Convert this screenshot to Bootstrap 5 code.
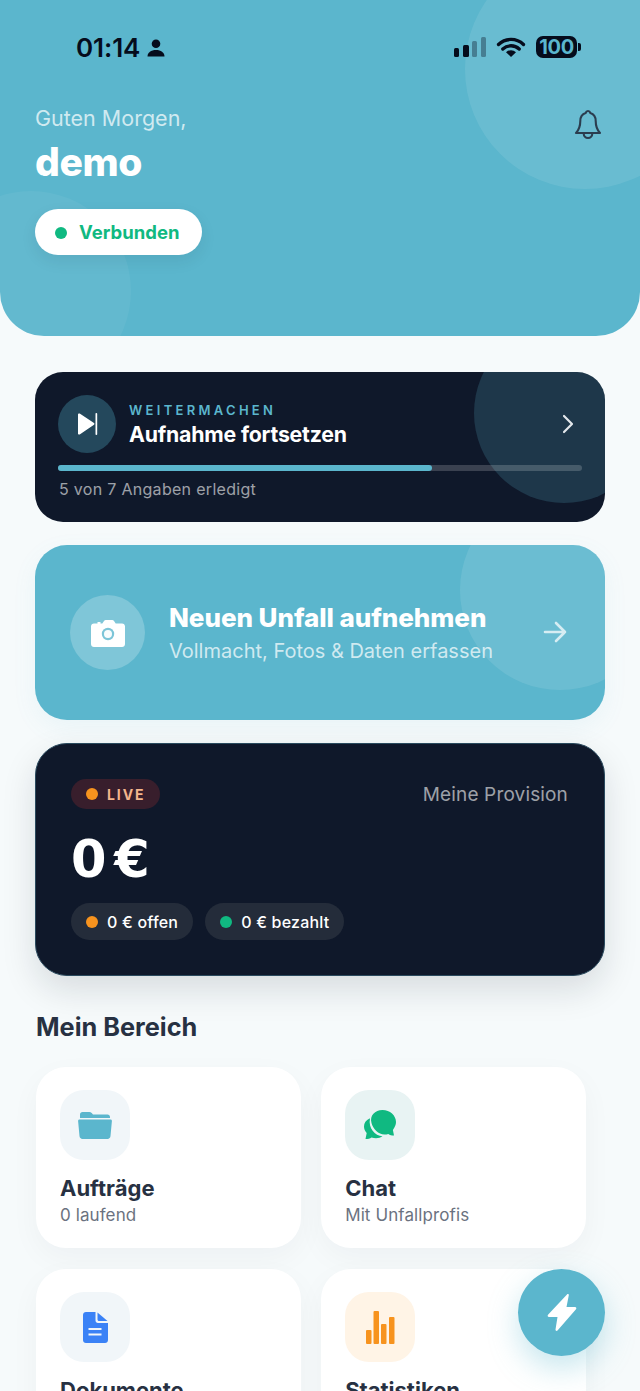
<!DOCTYPE html>
<html lang="de">
<head>
    <meta charset="UTF-8">
    <meta name="viewport" content="width=device-width, initial-scale=1.0">
    <title>Start</title>
    <link href="https://cdn.jsdelivr.net/npm/bootstrap@5.3.0/dist/css/bootstrap.min.css" rel="stylesheet">
    <style>
        html, body { height: 1391px; overflow: hidden; }
        body { font-family: Inter, "Liberation Sans", sans-serif; background: #f6fafb; color: #273142; }
        .app-screen { position: relative; height: 1391px; overflow: hidden; }

        /* header */
        .hero { position: relative; height: 336px; background: #5bb6cd; border-radius: 0 0 44px 44px; overflow: hidden; padding: 33px 36px 0 36px; }
        .blob { position: absolute; border-radius: 50%; }
        .blob-top { width: 240px; height: 240px; left: 465px; top: -51px; background: rgba(255,255,255,.09); }
        .blob-low { width: 200px; height: 200px; left: -69px; top: 191px; background: rgba(255,255,255,.05); }
        .status-row { position: relative; height: 30px; padding-left: 40px; color: #050c1c; }
        .clock { font-size: 26px; font-weight: 600; line-height: 30px; letter-spacing: -.1px; }
        .status-person { margin-left: 7px; }
        .status-right { margin-right: 23px; margin-top: -2px; }
        .status-wifi { margin: 0 10px 0 9px; }
        .battery { width: 41px; height: 22px; border-radius: 7px; background: #050c1c; color: #5bb6cd; font-size: 20px; font-weight: 700; line-height: 22px; text-align: center; letter-spacing: -.3px; }
        .battery-nub { width: 3px; height: 8px; background: #050c1c; border-radius: 0 2px 2px 0; margin-left: 1px; }
        .hello { position: relative; margin-top: 40px; margin-left: -1px; font-size: 21.500px; line-height: 30px; color: rgba(255,255,255,.72); }
        .bell-btn { position: absolute; left: 573px; top: 108px; }
        .user-name { position: relative; font-size: 39px; font-weight: 800; line-height: 44px; margin-top: 7px; margin-left: -1px; color: #fff; letter-spacing: -.4px; }
        .conn-pill { position: relative; display: inline-flex; align-items: center; gap: 12px; height: 46px; width: 167px; margin: 25px 0 0 -1px; padding-left: 20px; padding-top: 1px; border-radius: 23px; background: #fff; color: #10b981; font-size: 18.500px; font-weight: 700; box-shadow: 0 6px 16px rgba(15,23,42,.08); }
        .dot { display: inline-block; flex: none; width: 12px; height: 12px; border-radius: 50%; }
        .dot-green { background: #10b981; }
        .dot-orange { background: #f7931e; }

        /* cards */
        .content { padding: 36px 35px 0 35px; }
        .resume-box { position: relative; height: 150px; border-radius: 28px; background: #0f182a; overflow: hidden; padding: 23px 23px 0 23px; color: #fff; }
        .resume-blob { width: 180px; height: 180px; left: 439px; top: -49px; background: rgba(91,182,205,.2); }
        .resume-icon { position: relative; width: 58px; height: 58px; border-radius: 50%; background: #24485c; }
        .resume-text { position: relative; margin-left: 5px; margin-top: 2px; }
        .resume-kicker { font-size: 13px; font-weight: 600; line-height: 16px; letter-spacing: 3.300px; color: #5bb6cd; }
        .resume-title { font-size: 21.300px; font-weight: 700; line-height: 28px; margin-top: 2px; letter-spacing: -.2px; }
        .resume-chevron { position: absolute; left: 526px; top: 42px; }
        .track { position: relative; height: 6px; width: 524px; margin-top: 12px; border-radius: 3px; background: rgba(255,255,255,.18); }
        .track-fill { height: 6px; border-radius: 3px; background: #5bb6cd; }
        .resume-note { position: relative; margin-top: 8px; margin-left: 1px; font-size: 16px; line-height: 20px; letter-spacing: .3px; color: rgba(255,255,255,.6); }

        .new-box { position: relative; height: 175px; margin-top: 23px; border-radius: 32px; background: #5bb6cd; overflow: hidden; padding-left: 35px; color: #fff; box-shadow: 0 8px 24px rgba(91,182,205,.08); }
        .new-blob { width: 200px; height: 200px; left: 425px; top: -55px; background: rgba(255,255,255,.1); }
        .new-icon { position: relative; flex: none; width: 75px; height: 75px; border-radius: 50%; background: rgba(255,255,255,.22); }
        .new-text { position: relative; margin-left: 24px; margin-top: 2px; }
        .new-title { font-size: 26px; font-weight: 800; line-height: 34px; letter-spacing: -.05px; margin-top: -1px; }
        .new-sub { font-size: 20px; line-height: 30px; color: rgba(255,255,255,.72); margin-top: 1px; }
        .new-arrow { position: absolute; left: 508px; top: 75px; }

        .money-box { height: 233px; margin-top: 23px; border-radius: 32px; background: #0f182a; border: 1px solid #2a4a5e; padding: 35px 36px 0 35px; color: #fff; box-shadow: 0 14px 34px rgba(15,23,42,.13); }
        .live-pill { display: inline-flex; align-items: center; gap: 9px; height: 30px; padding: 0 15px; border-radius: 15px; background: #381e2c; color: #f3b58c; font-size: 14px; font-weight: 700; letter-spacing: 1.900px; }
        .money-label { font-size: 19px; color: rgba(255,255,255,.6); letter-spacing: .15px; position: relative; top: 1px; }
        .money-value { font-family: "DejaVu Sans", sans-serif; font-size: 51px; font-weight: 700; line-height: 60px; margin-top: 21px; letter-spacing: -5px; }
        .money-pills { margin-top: 13px; gap: 12px; }
        .money-pill { display: inline-flex; align-items: center; gap: 9px; height: 37px; padding: 0 15px; border-radius: 19px; background: #242c3a; font-size: 16px; font-weight: 500; letter-spacing: .2px; }

        /* tiles */
        .section-title { font-size: 25.300px; font-weight: 700; line-height: 34px; margin: 34px 0 23px 1px; color: #273142; }
        .tile-grid { display: grid; grid-template-columns: 265px 265px; gap: 21px 20.200px; margin-left: 1px; }
        .tile { height: 181px; border-radius: 30px; background: #fff; padding: 23px 24px 0 24px; box-shadow: 0 10px 30px rgba(15,23,42,.04); }
        .tile-icon { width: 70px; height: 70px; border-radius: 24px; }
        .tile-title { font-size: 22px; font-weight: 700; line-height: 30px; margin-top: 13px; color: #273142; }
        .tile-sub { font-size: 17px; line-height: 24px; letter-spacing: .1px; color: #6b7280; }
        .tint-slate { background: #f1f6f9; }
        .tint-green { background: #e8f3f3; }
        .tint-orange { background: #fff4e6; }

        .fab { position: absolute; left: 518px; top: 1269px; width: 87px; height: 87px; border-radius: 50%; background: #5bb6cd; box-shadow: 0 12px 30px rgba(91,182,205,.35); }
    </style>
</head>
<body>
<div class="app-screen">
    <header class="hero">
        <div class="blob blob-top"></div>
        <div class="blob blob-low"></div>

        <div class="status-row d-flex align-items-center">
            <span class="clock">01:14</span>
            <svg class="status-person" width="18" height="18" viewBox="0 0 18 18" fill="#050c1c"><circle cx="9" cy="4.800" r="4.300"/><path d="M0.500 17.500c0-4.200 3.600-6.600 8.500-6.600s8.500 2.400 8.500 6.600z"/></svg>
            <div class="status-right ms-auto d-flex align-items-center">
                <svg width="33" height="22" viewBox="0 0 33 22" fill="#050c1c"><rect x="0" y="12" width="5" height="9" rx="1.500"/><rect x="9" y="9" width="6" height="12" rx="1.500"/><rect x="18" y="5" width="5" height="16" rx="1.500" opacity=".35"/><rect x="27" y="1" width="5" height="20" rx="1.500" opacity=".35"/></svg>
                <svg class="status-wifi" width="30" height="22" viewBox="0 0 30 22"><path d="M2.500 8.500a18 18 0 0 1 25 0M6.800 13a12 12 0 0 1 16.400 0" fill="none" stroke="#050c1c" stroke-width="3.300" stroke-linecap="round"/><path d="M15 21l-5-4.800a7.500 7.500 0 0 1 10 0z" fill="#050c1c"/></svg>
                <div class="battery">100</div>
                <div class="battery-nub"></div>
            </div>
        </div>

        <div class="hello">Guten Morgen,</div>
        <div class="user-name">demo</div>
        <div class="conn-pill"><span class="dot dot-green"></span>Verbunden</div>
    </header>

    <svg class="bell-btn" width="30" height="34" viewBox="0 0 30 34" fill="none" stroke="#2b3d4f" stroke-width="2.100" stroke-linecap="round" stroke-linejoin="round"><path d="M15 3c-1.300 0-2 .8-2.300 1.900C9 6 7.300 9 7.300 13c0 5-1.500 9-4.300 12h24c-2.800-3-4.300-7-4.300-12 0-4-1.700-7-5.400-8.100C17 3.800 16.300 3 15 3z"/><path d="M10.700 25.500c0 2.800 2 4.500 4.300 4.500s4.300-1.700 4.300-4.500"/></svg>

    <main class="content">
        <section class="resume-box">
            <div class="blob resume-blob"></div>
            <div class="d-flex align-items-center gap-2">
                <div class="resume-icon d-flex align-items-center justify-content-center">
                    <svg width="22" height="24" viewBox="0 0 22 24" fill="#fff"><path d="M2 2.500c0-.9.900-1.400 1.700-.9L18 11c.6.400.6 1.300 0 1.700L3.700 22.400c-.8.500-1.700 0-1.700-.9z"/><rect x="19.500" y="1" width="1.700" height="22" rx=".8"/></svg>
                </div>
                <div class="resume-text">
                    <div class="resume-kicker">WEITERMACHEN</div>
                    <div class="resume-title">Aufnahme fortsetzen</div>
                </div>
            </div>
            <svg class="resume-chevron" width="14" height="20" viewBox="0 0 14 20" fill="none" stroke="#e4e8ec" stroke-width="2.200" stroke-linecap="round" stroke-linejoin="round"><path d="M3 2l8 8-8 8"/></svg>
            <div class="track"><div class="track-fill" style="width:71.4%"></div></div>
            <div class="resume-note">5 von 7 Angaben erledigt</div>
        </section>

        <section class="new-box d-flex align-items-center">
            <div class="blob new-blob"></div>
            <div class="new-icon d-flex align-items-center justify-content-center">
                <svg width="34" height="28" viewBox="0 0 34 28" fill="#fff"><path d="M3 4.500h3.500V3h3v1.500h1.800L13 2c.4-.6 1-1 1.800-1h6.400c.8 0 1.400.4 1.800 1l1.700 2.500H31c1.700 0 3 1.300 3 3V25c0 1.700-1.300 3-3 3H3c-1.700 0-3-1.300-3-3V7.500c0-1.700 1.300-3 3-3z"/><circle cx="17" cy="15" r="6.200" fill="#7cc5d8"/><circle cx="17" cy="15" r="4" fill="#fff" opacity=".95"/></svg>
            </div>
            <div class="new-text">
                <div class="new-title">Neuen Unfall aufnehmen</div>
                <div class="new-sub">Vollmacht, Fotos &amp; Daten erfassen</div>
            </div>
            <svg class="new-arrow" width="24" height="24" viewBox="0 0 24 24" fill="none" stroke="rgba(255,255,255,.72)" stroke-width="2.600" stroke-linecap="round" stroke-linejoin="round"><path d="M2 12h20M13 3l9 9-9 9"/></svg>
        </section>

        <section class="money-box">
            <div class="d-flex justify-content-between align-items-center">
                <span class="live-pill"><span class="dot dot-orange"></span>LIVE</span>
                <span class="money-label">Meine Provision</span>
            </div>
            <div class="money-value">0 €</div>
            <div class="money-pills d-flex">
                <span class="money-pill"><span class="dot dot-orange"></span>0 € offen</span>
                <span class="money-pill"><span class="dot dot-green"></span>0 € bezahlt</span>
            </div>
        </section>

        <h2 class="section-title">Mein Bereich</h2>
        <div class="tile-grid">
            <div class="tile">
                <div class="tile-icon tint-slate d-flex align-items-center justify-content-center">
                    <svg width="34" height="28" viewBox="0 0 34 28" fill="#5bb6cd"><path d="M2 7V3.500C2 2 3 1 4.500 1h6.800c1 0 1.800.4 2.400 1.100L15 3.500h14.500c1.500 0 2.500 1 2.500 2.500v1z"/><path d="M1.500 8.500h31c.9 0 1.500.7 1.400 1.600l-1.400 15c-.1 1.600-1.300 2.900-3 2.900H4.500c-1.700 0-2.900-1.300-3-2.900L.1 10.100c-.1-.9.500-1.600 1.400-1.600z"/></svg>
                </div>
                <div class="tile-title">Aufträge</div>
                <div class="tile-sub">0 laufend</div>
            </div>
            <div class="tile">
                <div class="tile-icon tint-green d-flex align-items-center justify-content-center">
                    <svg width="32" height="32" viewBox="0 0 32 32" fill="#10b981"><path d="M5.500 9.500C2 11 0 14 0 17.500c0 2.500 1 4.700 2.700 6.400L1.500 30c2.500 0 4.500-.5 6-1.600 1.500.5 3 .8 4.500.8 2.500 0 4.800-.7 6.500-2-7.500-.4-14.500-8-12.500-17.700z"/><path d="M18.500 1C11 1 5.500 6.500 7.500 14c1.500 6 7 11.500 13 11.500 1.300 0 2.600-.2 3.800-.6 1.500 1 3.400 1.500 5.700 1.500l-1.100-5.500C31 18 32 15.500 32 13 32 6.500 26 1 18.500 1z"/></svg>
                </div>
                <div class="tile-title">Chat</div>
                <div class="tile-sub">Mit Unfallprofis</div>
            </div>
            <div class="tile">
                <div class="tile-icon tint-slate d-flex align-items-center justify-content-center">
                    <svg width="25" height="31" viewBox="0 0 25 31" fill="#3b82f6"><path d="M3 0h9.500v8.500c0 1.500 1 2.500 2.500 2.500h10v17c0 1.700-1.300 3-3 3H3c-1.700 0-3-1.300-3-3V3c0-1.700 1.300-3 3-3z"/><path d="M14.500 .5L24.500 9h-8.500c-.9 0-1.500-.6-1.500-1.500z"/><rect x="5.500" y="16" width="13" height="2" fill="#f1f6f9"/><rect x="5.500" y="21.500" width="13" height="2" fill="#f1f6f9"/></svg>
                </div>
                <div class="tile-title">Dokumente</div>
                <div class="tile-sub">0 Dateien</div>
            </div>
            <div class="tile">
                <div class="tile-icon tint-orange d-flex align-items-center justify-content-center">
                    <svg width="30" height="34" viewBox="0 0 30 34" fill="#f7931e"><rect x="1" y="20" width="5.500" height="14" rx="1"/><rect x="8.500" y="1" width="5.500" height="33" rx="1"/><rect x="16" y="14" width="5.500" height="20" rx="1"/><rect x="24" y="7" width="5.500" height="27" rx="1"/></svg>
                </div>
                <div class="tile-title">Statistiken</div>
                <div class="tile-sub">Übersicht</div>
            </div>
        </div>
    </main>

    <div class="fab d-flex align-items-center justify-content-center">
        <svg width="30" height="39" viewBox="0 0 30 39" fill="#fff"><path d="M20 1.500c.7-1 2-.4 1.800.8L19.500 14H28c1.200 0 1.800 1.300 1 2.200L10.500 37.500c-.8.900-2.200.2-2-1L10.500 24H2c-1.200 0-1.800-1.400-1-2.300z"/></svg>
    </div>
</div>
<script src="https://cdn.jsdelivr.net/npm/bootstrap@5.3.0/dist/js/bootstrap.bundle.min.js"></script>
</body>
</html>
